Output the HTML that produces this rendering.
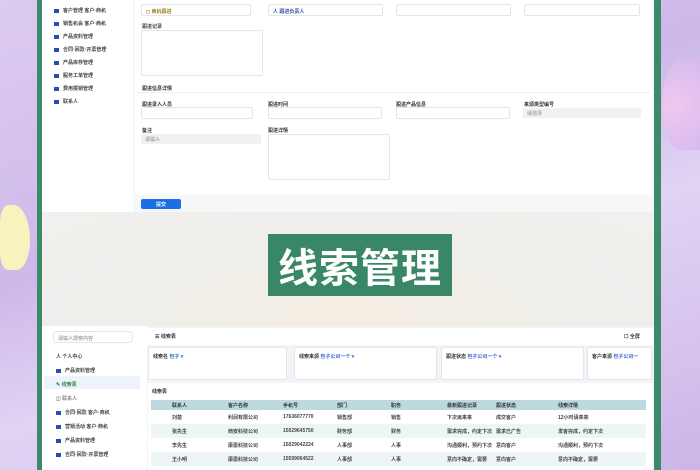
<!DOCTYPE html>
<html><head><meta charset="utf-8"><style>
*{margin:0;padding:0;box-sizing:border-box}
body{width:700px;height:470px;overflow:hidden;position:relative;font-family:"Liberation Sans","Noto Sans CJK SC",sans-serif;background:linear-gradient(160deg,#dccbf0,#cdb9ea 40%,#e2d3f4 60%,#cbb6e8);}
.a{position:absolute}
.t{position:absolute;font-size:5px;color:#444;white-space:nowrap;font-weight:bold}
.box{position:absolute;border:1px solid #e3e5ea;background:#fff;border-radius:2px}
.ic{display:inline-block;width:5px;height:4px;background:#2a4cb0;margin-right:4px;vertical-align:middle}
</style></head><body>
<div class="a" style="left:0;top:205px;width:30px;height:65px;background:#f6f3bf;border-radius:30% 60% 50% 30%"></div>
<div class="a" style="left:662px;top:60px;width:38px;height:90px;background:radial-gradient(circle at 30% 50%,#f0c8ee,#d6baf0);border-radius:50% 0 0 50%"></div>
<div class="a" style="left:37px;top:0;width:5px;height:470px;background:#3d8a6b"></div>
<div class="a" style="left:654px;top:0;width:7px;height:470px;background:#3d8a6b"></div>
<div class="a" style="left:42px;top:0;width:612px;height:470px;background:#fff"></div>
<div class="a" style="left:133px;top:0;width:521px;height:212px;background:#f6f7f9"></div>
<div class="a" style="left:135px;top:0;width:517px;height:195px;background:#fff"></div>
<div class="t" style="left:54px;top:7px"><span class="ic"></span>客户管理 客户·商机</div>
<div class="t" style="left:54px;top:20px"><span class="ic"></span>销售机会 客户·商机</div>
<div class="t" style="left:54px;top:33px"><span class="ic"></span>产品资料管理</div>
<div class="t" style="left:54px;top:46px"><span class="ic"></span>合同·回款·开票管理</div>
<div class="t" style="left:54px;top:59px"><span class="ic"></span>产品库存管理</div>
<div class="t" style="left:54px;top:72px"><span class="ic"></span>服务工单管理</div>
<div class="t" style="left:54px;top:85px"><span class="ic"></span>费用报销管理</div>
<div class="t" style="left:54px;top:98px"><span class="ic"></span>联系人</div>
<div class="box" style="left:141px;top:4px;width:110px;height:12px"><span class="t" style="left:4px;top:3px;color:#a08020">◻ 商机跟进</span></div>
<div class="box" style="left:268px;top:4px;width:115px;height:12px"><span class="t" style="left:4px;top:3px;color:#4050a0">人 跟进负责人</span></div>
<div class="box" style="left:396px;top:4px;width:115px;height:12px"></div>
<div class="box" style="left:524px;top:4px;width:116px;height:12px"></div>
<div class="t" style="left:142px;top:23px">跟进记录</div>
<div class="box" style="left:141px;top:30px;width:122px;height:46px"></div>
<div class="a" style="left:137px;top:92px;width:513px;height:1px;background:#eee"></div>
<div class="t" style="left:142px;top:85px;color:#333">跟进信息详情</div>
<div class="t" style="left:142px;top:101px;color:#333">跟进录入人员</div>
<div class="t" style="left:268px;top:101px;color:#333">跟进时间</div>
<div class="t" style="left:396px;top:101px;color:#333">跟进产品信息</div>
<div class="t" style="left:524px;top:101px;color:#333">来源类型编号</div>
<div class="box" style="left:141px;top:107px;width:112px;height:12px"></div>
<div class="box" style="left:268px;top:107px;width:114px;height:12px"></div>
<div class="box" style="left:396px;top:107px;width:114px;height:12px"></div>
<div class="a" style="left:523px;top:108px;width:118px;height:10px;background:#f0f1f3"><span class="t" style="left:4px;top:2px;color:#aaa">请选择</span></div>
<div class="t" style="left:142px;top:127px;color:#333">备注</div>
<div class="t" style="left:268px;top:127px;color:#333">跟进详情</div>
<div class="a" style="left:141px;top:134px;width:120px;height:10px;background:#f0f1f3"><span class="t" style="left:4px;top:2px;color:#aaa">请输入</span></div>
<div class="box" style="left:268px;top:134px;width:122px;height:46px"></div>
<div class="a" style="left:141px;top:199px;width:40px;height:10px;background:#1a6ee8;border-radius:2px"><span class="t" style="left:15px;top:2px;color:#fff">提交</span></div>
<div class="a" style="left:42px;top:212px;width:612px;height:114px;background:radial-gradient(ellipse at 50% 100%,#f4ede2,#efeeeb 60%,#f0f0ee)"></div>
<div class="a" style="left:268px;top:234px;width:184px;height:62px;background:#3a8767;color:#fff;font-size:40px;line-height:62px;text-align:center;font-family:'Noto Sans CJK SC',sans-serif;font-weight:bold;letter-spacing:1px">线索管理</div>
<div class="a" style="left:147px;top:326px;width:507px;height:144px;background:#f3f4f7"></div>
<div class="box" style="left:53px;top:331px;width:80px;height:12px;border-radius:4px"><span class="t" style="left:4px;top:3px;color:#aaa">请输入搜索内容</span></div>
<div class="t" style="left:56px;top:353px">人 个人中心</div>
<div class="t" style="left:56px;top:367px"><span class="ic"></span>产品资料管理</div>
<div class="a" style="left:44px;top:376px;width:96px;height:13px;background:#eef3fb"></div>
<div class="t" style="left:56px;top:381px;color:#2a8a4a">✎ 线索表</div>
<div class="t" style="left:56px;top:395px;color:#888">◫ 联系人</div>
<div class="t" style="left:56px;top:409px"><span class="ic"></span>合同·回款 客户·商机</div>
<div class="t" style="left:56px;top:423px"><span class="ic"></span>营销活动 客户·商机</div>
<div class="t" style="left:56px;top:437px"><span class="ic"></span>产品资料管理</div>
<div class="t" style="left:56px;top:451px"><span class="ic"></span>合同·回款·开票管理</div>
<div class="a" style="left:147px;top:328px;width:507px;height:17px;background:#fff"><span class="t" style="left:8px;top:5px;color:#333">☰ 线索表</span><span class="t" style="left:477px;top:5px;color:#333">☐ 全屏</span></div>
<div class="box" style="left:148px;top:347px;width:139px;height:33px"><span class="t" style="left:4px;top:5px;color:#333">线索名 <span style="color:#3a6ad8">包子 ▾</span></span></div>
<div class="box" style="left:294px;top:347px;width:143px;height:33px"><span class="t" style="left:4px;top:5px;color:#333">线索来源 <span style="color:#3a6ad8">包子公司一个 ▾</span></span></div>
<div class="box" style="left:441px;top:347px;width:143px;height:33px"><span class="t" style="left:4px;top:5px;color:#333">跟进状态 <span style="color:#3a6ad8">包子公司一个 ▾</span></span></div>
<div class="box" style="left:587px;top:347px;width:65px;height:33px"><span class="t" style="left:4px;top:5px;color:#333">客户来源 <span style="color:#3a6ad8">包子公司一</span></span></div>
<div class="a" style="left:148px;top:383px;width:504px;height:87px;background:#fff"></div>
<div class="t" style="left:152px;top:388px;color:#333">线索表</div>
<div class="a" style="left:151px;top:400px;width:495px;height:10px;background:#bcd9df"></div>
<div class="a" style="left:151px;top:410px;width:495px;height:60px;background:repeating-linear-gradient(#fff 0 14px,#eef5f7 14px 28px)"></div>
<div class="t" style="left:172px;top:402px;color:#333">联系人</div><div class="t" style="left:228px;top:402px;color:#333">客户名称</div><div class="t" style="left:283px;top:402px;color:#333">手机号</div><div class="t" style="left:337px;top:402px;color:#333">部门</div><div class="t" style="left:391px;top:402px;color:#333">职务</div><div class="t" style="left:447px;top:402px;color:#333">最新跟进记录</div><div class="t" style="left:496px;top:402px;color:#333">跟进状态</div><div class="t" style="left:558px;top:402px;color:#333">线索详情</div>
<div class="t" style="left:172px;top:414px">刘楚</div><div class="t" style="left:228px;top:414px">利润有限公司</div><div class="t" style="left:283px;top:414px">17636077770</div><div class="t" style="left:337px;top:414px">销售部</div><div class="t" style="left:391px;top:414px">销售</div><div class="t" style="left:447px;top:414px">下次再来来</div><div class="t" style="left:496px;top:414px">成交客户</div><div class="t" style="left:558px;top:414px">12小时请来来</div>
<div class="t" style="left:172px;top:428px">张先生</div><div class="t" style="left:228px;top:428px">西安科技公司</div><div class="t" style="left:283px;top:428px">15029645750</div><div class="t" style="left:337px;top:428px">财务部</div><div class="t" style="left:391px;top:428px">财务</div><div class="t" style="left:447px;top:428px">需求完成，约定下次</div><div class="t" style="left:496px;top:428px">需求已广告</div><div class="t" style="left:558px;top:428px">发客完成，约定下次</div>
<div class="t" style="left:172px;top:442px">李先生</div><div class="t" style="left:228px;top:442px">康恩科技公司</div><div class="t" style="left:283px;top:442px">15029042224</div><div class="t" style="left:337px;top:442px">人事部</div><div class="t" style="left:391px;top:442px">人事</div><div class="t" style="left:447px;top:442px">沟通顺利，预约下次</div><div class="t" style="left:496px;top:442px">意向客户</div><div class="t" style="left:558px;top:442px">沟通顺利，预约下次</div>
<div class="t" style="left:172px;top:456px">王小明</div><div class="t" style="left:228px;top:456px">康恩科技公司</div><div class="t" style="left:283px;top:456px">15599064522</div><div class="t" style="left:337px;top:456px">人事部</div><div class="t" style="left:391px;top:456px">人事</div><div class="t" style="left:447px;top:456px">意向不确定，需要</div><div class="t" style="left:496px;top:456px">意向客户</div><div class="t" style="left:558px;top:456px">意向不确定，需要</div>
</body></html>
